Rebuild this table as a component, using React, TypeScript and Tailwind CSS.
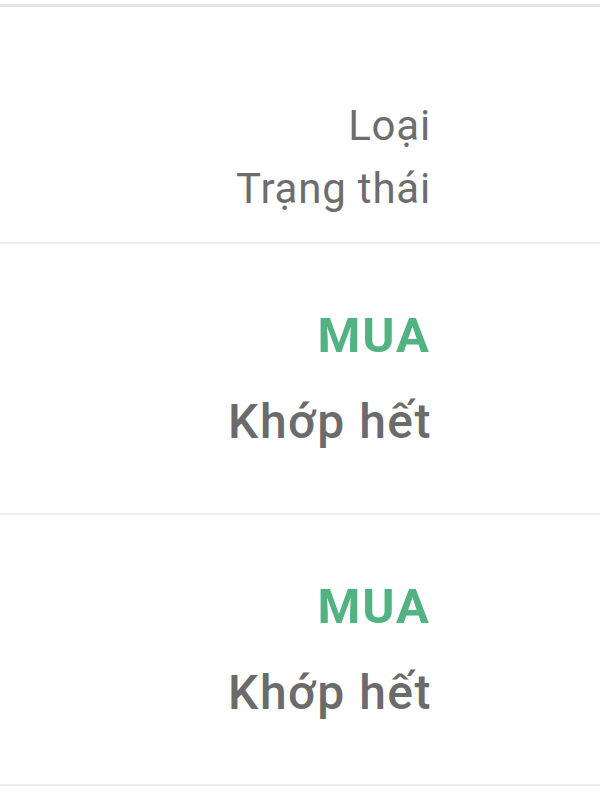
export default function App() {
  const rows = [
    { side: "MUA", status: "Khớp hết" },
    { side: "MUA", status: "Khớp hết" },
  ];

  return (
    <div className="min-h-[800px] w-[600px] bg-white font-['Roboto',sans-serif]">
      <div className="h-[4px]" />
      <div className="h-[3px] bg-[#e4e4e4]" />
      <div className="flex h-[235px] flex-col items-end justify-start pt-[87px] pr-[169px] text-[42px] leading-[63px] tracking-[0.8px] text-[#6d6d6d]">
        <div>Loại</div>
        <div>Trạng thái</div>
      </div>
      <div className="h-[2px] bg-[#ededed]" />
      {rows.map((r, i) => (
        <div key={i}>
          <div className="flex h-[269px] flex-col items-end pt-[64px]">
            <div className="pr-[169px] text-[49px] font-bold leading-[56px] tracking-[2px] text-[#52b282]">{r.side}</div>
            <div className="mt-[28px] pr-[168px] text-[48px] font-medium leading-[60px] tracking-[1.5px] text-[#6b6b6b]">
              {r.status}
            </div>
          </div>
          <div className="h-[2px] bg-[#ededed]" />
        </div>
      ))}
    </div>
  );
}
